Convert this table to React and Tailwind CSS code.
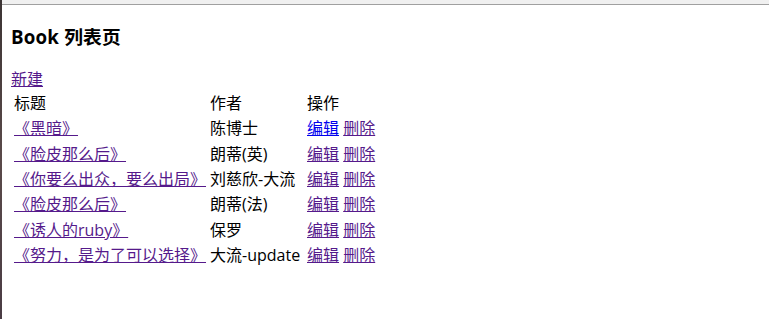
export default function App() {
  const rows = [
    { title: "《黑暗》", author: "陈博士", editBlue: true },
    { title: "《脸皮那么后》", author: "朗蒂(英)" },
    { title: "《你要么出众，要么出局》", author: "刘慈欣-大流" },
    { title: "《脸皮那么后》", author: "朗蒂(法)" },
    { title: "《诱人的ruby》", author: "保罗" },
    { title: "《努力，是为了可以选择》", author: "大流-update" },
  ];
  return (
    <div className="flex min-h-[319px] bg-white font-['Open_Sans','Noto_Sans_CJK_SC',sans-serif] text-black">
      <div className="w-[2px] bg-gradient-to-b from-[#3c3434] via-[#5a4a4a] to-[#4a3c44]" />
      <div className="flex-1">
        <div className="h-[5px] bg-[#f0f0f0] border-b border-[#a0a0a0]" />
        <div className="pl-[9px]">
          <h3 className="mt-[19px] mb-[20px] text-[18.72px] font-bold leading-[25px] tracking-[0.2px]">Book 列表页</h3>
          <div className="text-[16px] leading-[21px]">
            <a href="#" className="text-[#551a8b] underline">新建</a>
          </div>
          <table className="border-separate border-spacing-[2px] text-[16px] leading-[21.33px]">
            <tbody>
              <tr>
                <td className="p-px">标题</td>
                <td className="p-px w-[95px]">作者</td>
                <td className="p-px">操作</td>
              </tr>
              {rows.map((r, i) => (
                <tr key={i}>
                  <td className="p-px">
                    <a href="#" className="text-[#551a8b] underline">{r.title}</a>
                  </td>
                  <td className="p-px whitespace-nowrap">{r.author}</td>
                  <td className="p-px whitespace-nowrap">
                    <a href="#" className={r.editBlue ? "text-[#0000ee] underline" : "text-[#551a8b] underline"}>编辑</a>{" "}
                    <a href="#" className="text-[#551a8b] underline">删除</a>
                  </td>
                </tr>
              ))}
            </tbody>
          </table>
        </div>
      </div>
    </div>
  );
}
